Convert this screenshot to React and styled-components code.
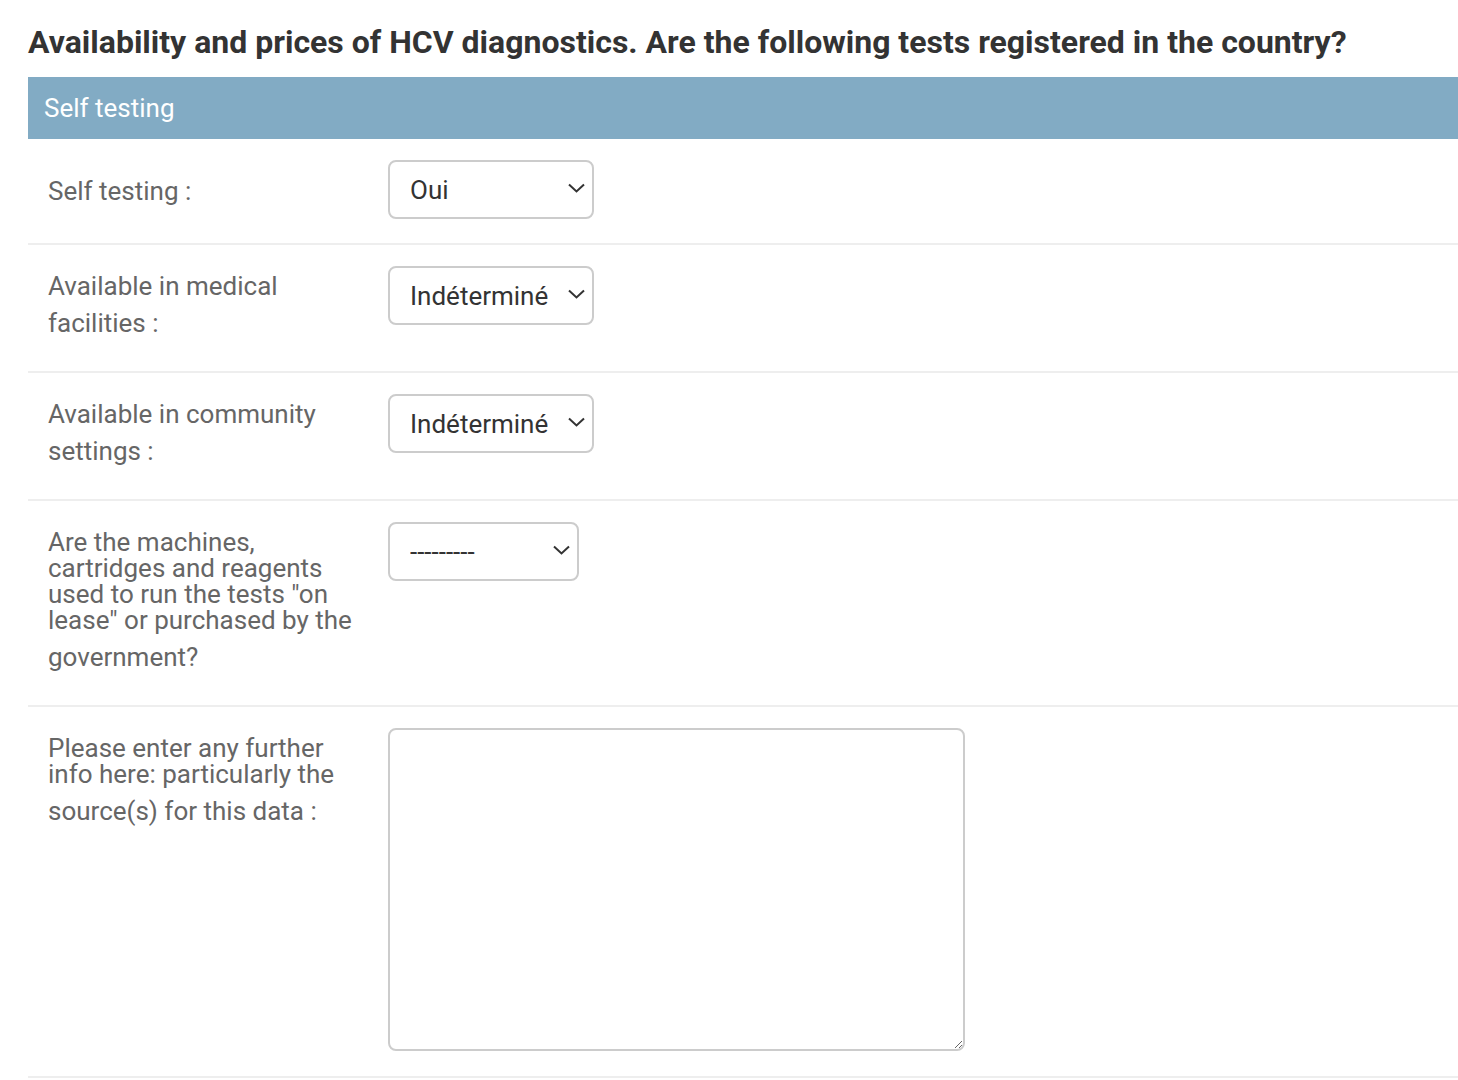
import React from 'react';
import styled, { createGlobalStyle } from 'styled-components';

const GlobalStyle = createGlobalStyle`
	html, body {
		margin: 0;
		padding: 0;
		background: #fff;
	}

	body {
		font-family: Roboto, "Liberation Sans", sans-serif;
		color: #333;
	}
`;

const StyledPage = styled.div`
	padding: 23px 0 0 28px;
`;

const StyledTitle = styled.h2`
	margin: 0 0 16px 0;
	font-size: 32px;
	line-height: 38px;
	font-weight: 700;
	color: #333;
`;

const StyledFieldset = styled.fieldset`
	margin: 0;
	padding: 0;
	border: none;
	min-width: 0;
`;

const StyledModuleHeader = styled.h3`
	margin: 0;
	padding: 16px;
	height: 62px;
	box-sizing: border-box;
	background: #82abc4;
	color: #fff;
	font-size: 26px;
	line-height: 30px;
	font-weight: 400;
`;

const StyledRow = styled.div`
	display: flex;
	align-items: flex-start;
	padding: 20px;
	border-bottom: 2px solid #eee;
`;

const StyledLabel = styled.label`
	display: block;
	flex: none;
	width: 320px;
	padding: 8px 20px 0 0;
	font-size: 26px;
	line-height: 1;
	color: #666;
	overflow-wrap: break-word;

	&::after {
		content: '';
		display: inline-block;
		vertical-align: middle;
		height: 52px;
	}
`;

const StyledSelectWrap = styled.div`
	position: relative;
	width: ${({ $width }) => $width}px;
	height: 64px;
	padding-top: 1px;
	box-sizing: border-box;
`;

const StyledSelect = styled.select`
	appearance: none;
	-webkit-appearance: none;
	display: block;
	width: 100%;
	height: 59px;
	margin: 0;
	padding: 0 40px 0 20px;
	border: 2px solid #ccc;
	border-radius: 8px;
	background: #fff;
	font-family: Roboto, "Liberation Sans", sans-serif;
	font-size: 26px;
	color: #333;
	outline: none;
`;

const StyledChevron = styled.svg`
	position: absolute;
	right: 9px;
	top: 24px;
	width: 17px;
	height: 10px;
	pointer-events: none;
`;

const StyledTextarea = styled.textarea`
	display: block;
	box-sizing: border-box;
	width: 577px;
	height: 323px;
	margin: 1px 0 5px 0;
	padding: 10px 12px;
	border: 2px solid #ccc;
	border-radius: 8px;
	font-family: Roboto, "Liberation Sans", sans-serif;
	font-size: 26px;
	color: #333;
	resize: both;
	outline: none;
`;

const FIELDS = [
	{ label: 'Self testing :', value: 'Oui', width: 206 },
	{ label: 'Available in medical facilities :', value: 'Indéterminé', width: 206 },
	{ label: 'Available in community settings :', value: 'Indéterminé', width: 206 },
	{
		label: 'Are the machines, cartridges and reagents used to run the tests "on lease" or purchased by the government?',
		value: '---------',
		width: 191,
	},
];

const OPTIONS = ['---------', 'Oui', 'Non', 'Indéterminé'];

function Chevron() {
	return (
		<StyledChevron viewBox="0 0 17 10" fill="none">
			<path d="M1 1.5 L8.5 8.5 L16 1.5" stroke="#333" strokeWidth="2" />
		</StyledChevron>
	);
}

function SelectField({ field, index }) {
	return (
		<StyledRow>
			<StyledLabel htmlFor={`field-${index}`}>{field.label}</StyledLabel>
			<StyledSelectWrap $width={field.width}>
				<StyledSelect id={`field-${index}`} defaultValue={field.value}>
					{OPTIONS.map((option) => (
						<option key={option} value={option}>
							{option}
						</option>
					))}
				</StyledSelect>
				<Chevron />
			</StyledSelectWrap>
		</StyledRow>
	);
}

export default function App() {
	return (
		<StyledPage>
			<GlobalStyle />
			<StyledTitle>
				Availability and prices of HCV diagnostics. Are the following tests registered in the country?
			</StyledTitle>
			<StyledFieldset>
				<StyledModuleHeader>Self testing</StyledModuleHeader>
				{FIELDS.map((field, index) => (
					<SelectField key={`${index}-field`} field={field} index={index} />
				))}
				<StyledRow>
					<StyledLabel htmlFor="field-notes">
						Please enter any further info here: particularly the source(s) for this data :
					</StyledLabel>
					<StyledTextarea id="field-notes" />
				</StyledRow>
			</StyledFieldset>
		</StyledPage>
	);
}
